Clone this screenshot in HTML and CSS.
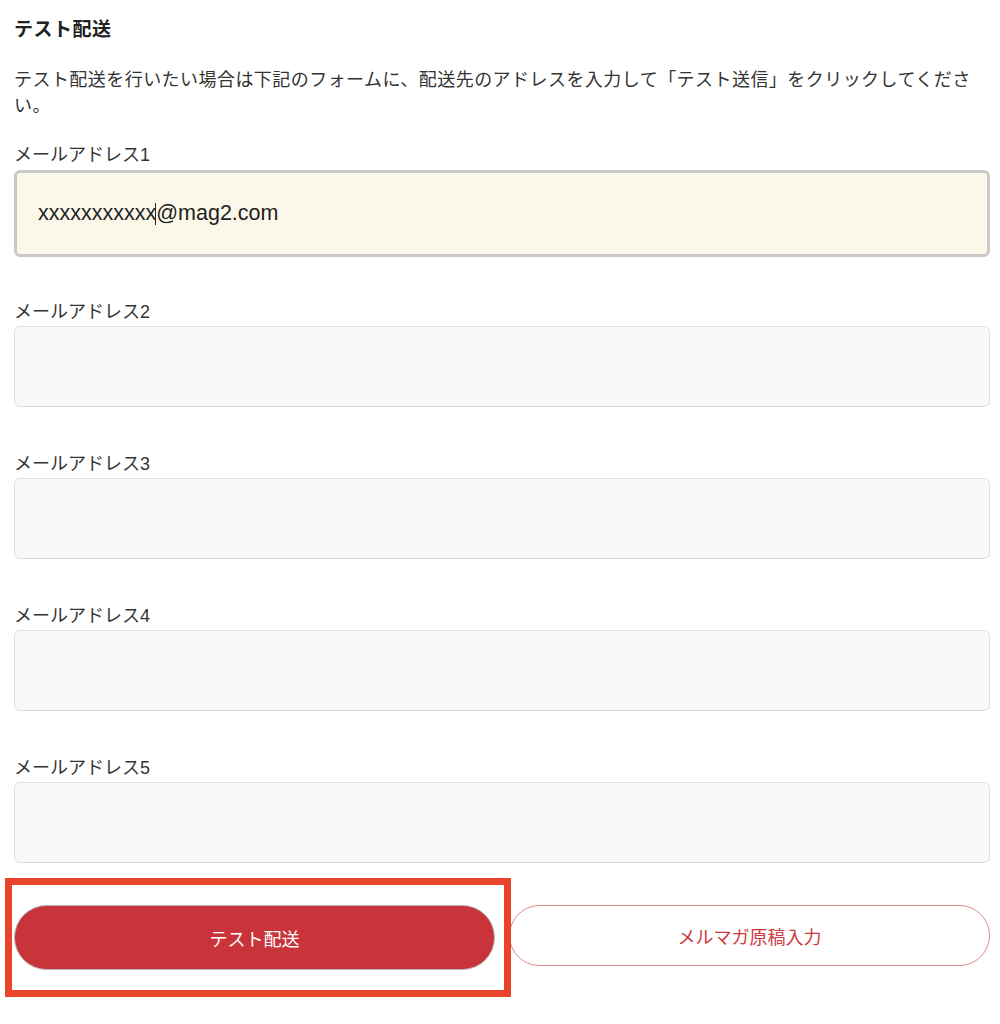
FILE: index.html
```html
<!DOCTYPE html>
<html lang="ja">
<head>
<meta charset="utf-8">
<title>テスト配送</title>
<link rel="stylesheet" href="styles.css">
</head>
<body>
<main class="page">
  <h2 class="title">テスト配送</h2>
  <p class="lead">テスト配送を行いたい場合は下記のフォームに、配送先のアドレスを入力して「テスト送信」をクリックしてください。</p>

  <div class="field field--focus">
    <label class="label">メールアドレス1</label>
    <div class="input input--focus"><span class="value">xxxxxxxxxxx<span class="caret"></span>@mag2.com</span></div>
  </div>
  <div class="field">
    <label class="label">メールアドレス2</label>
    <div class="input"></div>
  </div>
  <div class="field">
    <label class="label">メールアドレス3</label>
    <div class="input"></div>
  </div>
  <div class="field">
    <label class="label">メールアドレス4</label>
    <div class="input"></div>
  </div>
  <div class="field field--last">
    <label class="label">メールアドレス5</label>
    <div class="input"></div>
  </div>

  <div class="actions">
    <div class="highlight"></div>
    <button class="btn btn--primary" type="button">テスト配送</button>
    <button class="btn btn--outline" type="button">メルマガ原稿入力</button>
  </div>
</main>
</body>
</html>
```

FILE: styles.css
```css
html, body {
  margin: 0;
  padding: 0;
  background: #ffffff;
}

body {
  font-family: "Liberation Sans", "Noto Sans CJK JP", sans-serif;
  color: #333333;
}

.page {
  width: 976px;
  padding: 15px 0 40px 14px;
}

.title {
  margin: 0;
  font-family: "Noto Sans CJK JP", sans-serif;
  font-size: 19px;
  line-height: 26px;
  font-weight: 700;
  letter-spacing: 0.5px;
  color: #222222;
}

.lead {
  margin: 24px 0 25px;
  padding-right: 4px;
  font-family: "Noto Sans CJK JP", sans-serif;
  font-size: 18px;
  line-height: 26px;
  letter-spacing: 0.45px;
  color: #333333;
}

.field {
  display: flex;
  flex-direction: column;
  margin-bottom: 44px;
}

.field--focus {
  margin-bottom: 42px;
}

.field--last {
  margin-bottom: 42px;
}

.label {
  display: block;
  font-size: 18px;
  line-height: 26px;
  margin-bottom: 1px;
  color: #333333;
}

.input {
  box-sizing: border-box;
  height: 81px;
  border: 1px solid #dcdcdc;
  border-radius: 6px;
  background: #f9f9f9;
  display: flex;
  align-items: center;
  padding-left: 21px;
}

.input--focus {
  height: 87px;
  margin-top: 1px;
  border: 3px solid #c9c9c9;
  background: #fbf8ea;
}

.value {
  font-family: "Liberation Sans", sans-serif;
  font-size: 21.5px;
  color: #222222;
  display: flex;
  align-items: center;
}

.caret {
  display: inline-block;
  width: 0;
  height: 22px;
  border-left: 1px solid #222222;
  margin-left: -1px;
}

.actions {
  position: relative;
  display: flex;
  align-items: flex-start;
  gap: 14px;
}

.btn {
  flex: 1;
  box-sizing: border-box;
  border-radius: 40px;
  font-family: "Noto Sans CJK JP", sans-serif;
  font-size: 18px;
  cursor: pointer;
  padding: 0;
}

.btn--primary {
  height: 65px;
  background: #c9333a;
  border: 1px solid #b8b8b8;
  color: #ffffff;
  padding-top: 1px;
}

.btn--outline {
  height: 61px;
  background: #ffffff;
  border: 1px solid #e08a8d;
  color: #cc3a40;
}

.highlight {
  position: absolute;
  left: -9px;
  top: -27px;
  width: 506px;
  height: 119px;
  box-sizing: border-box;
  border: 7px solid #e9432b;
  pointer-events: none;
}
```
